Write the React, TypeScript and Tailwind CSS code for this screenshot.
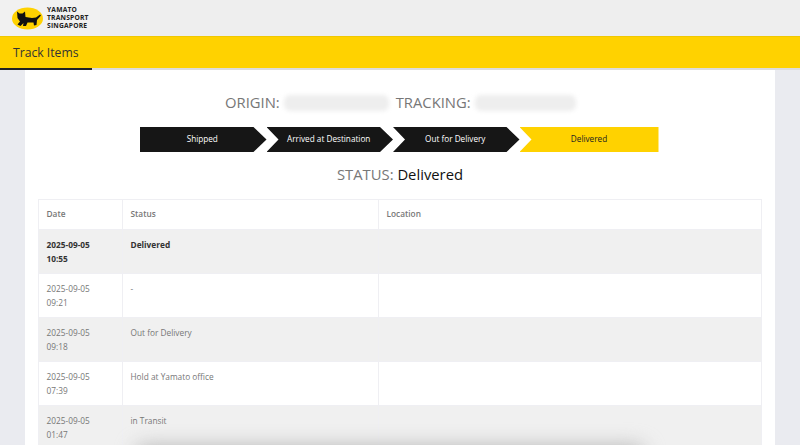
import React from 'react';

const steps = ['Shipped', 'Arrived at Destination', 'Out for Delivery'];

const rows = [
  { date: '2025-09-05', time: '10:55', status: 'Delivered', bold: true },
  { date: '2025-09-05', time: '09:21', status: '-' },
  { date: '2025-09-05', time: '09:18', status: 'Out for Delivery' },
  { date: '2025-09-05', time: '07:39', status: 'Hold at Yamato office' },
  { date: '2025-09-05', time: '01:47', status: 'in Transit' },
];

const Logo = () => (
  <svg width="31" height="23" viewBox="0 0 31 23" className="shrink-0">
    <ellipse cx="15.5" cy="11.5" rx="15.5" ry="11" fill="#ffd200" />
    <path
      d="M5 4.5 L7.5 6.5 L10.5 6.5 L13 4.5 L13.5 10 L20 11 L24 10.5 L28 7.5 L29 8.5 L25 13 L24.5 18 L22 18.5 L21.5 15.5 L15.5 15.5 L14 19 L11 19 L11.5 16 L8.5 19 L5.5 17.5 L8 14.5 L5.5 11 Z"
      fill="#111"
    />
  </svg>
);

const App: React.FC = () => {
  return (
    <div className="relative h-[445px] w-[800px] overflow-hidden bg-[#eaebf0] font-['Open_Sans',sans-serif]">
      <header className="flex h-9 bg-[#eeeeee]">
        <div className="flex w-[100px] items-center gap-[4px] bg-[#f1f1f1] pl-[12px]">
          <Logo />
          <div className="text-[6.7px] font-bold leading-[8px] tracking-[0.2px] text-[#222]">
            <div>YAMATO</div>
            <div>TRANSPORT</div>
            <div>SINGAPORE</div>
          </div>
        </div>
      </header>

      <div className="flex h-8 items-center border-t border-[#f0c800] bg-[#ffd200] pl-[13px] pt-[2px] text-[12.2px] text-[#333]">
        Track Items
      </div>
      <div className="h-0.5 bg-[#dcdcdc]">
        <div className="h-0.5 w-[92px] bg-[#222]" />
      </div>

      <main className="mx-[25px] h-[375px] bg-white px-[13px]">
        <div className="flex h-[57px] items-end pb-[15px] pl-[187px] text-[14.8px] leading-[20px] text-[#777]">
          <span>ORIGIN:</span>
          <span className="mb-[1px] ml-[4px] mr-[7px] h-[16px] w-[105px] rounded-[6px] bg-[#eeeeee] blur-[2px]" />
          <span>TRACKING:</span>
          <span className="mb-[1px] ml-[4px] h-[16px] w-[101px] rounded-[6px] bg-[#eeeeee] blur-[2px]" />
        </div>

        <div className="flex pl-[102px]">
          {steps.map((step) => (
            <div
              key={step}
              className="flex h-[25px] w-[126.5px] items-center justify-center bg-[#161616] pr-[2px] text-[8.2px] text-white first:[clip-path:polygon(0_0,calc(100%-13px)_0,100%_50%,calc(100%-13px)_100%,0_100%)] [clip-path:polygon(0_0,calc(100%-13px)_0,100%_50%,calc(100%-13px)_100%,0_100%,12px_50%)]"
            >
              {step}
            </div>
          ))}
          <div className="flex h-[25px] w-[139px] items-center justify-center bg-[#ffd200] text-[8.2px] text-[#222] [clip-path:polygon(0_0,100%_0,100%_100%,0_100%,12px_50%)]">
            Delivered
          </div>
        </div>

        <div className="mt-[11px] text-center text-[14.8px] leading-[22px] text-[#777]">
          STATUS: <span className="text-[#111]">Delivered</span>
        </div>

        <table className="mt-[14px] w-[724px] table-fixed border-collapse text-[8.3px] text-[#777]">
          <colgroup>
            <col className="w-[84px]" />
            <col className="w-[256px]" />
            <col />
          </colgroup>
          <thead>
            <tr className="h-[30px] font-semibold">
              <th className="border border-[#efeff3] pl-[7.5px] text-left font-semibold">Date</th>
              <th className="border border-[#efeff3] pl-[7.5px] text-left font-semibold">Status</th>
              <th className="border border-[#efeff3] pl-[7.5px] text-left font-semibold">Location</th>
            </tr>
          </thead>
          <tbody>
            {rows.map((row, i) => (
              <tr
                key={row.time}
                className={`h-[44px] align-top leading-[14px] ${i % 2 === 0 ? 'bg-[#f0f0f0]' : 'bg-white'} ${row.bold ? 'font-bold text-[#333]' : ''}`}
              >
                <td className="border border-[#efeff3] pl-[7.5px] pt-[8px]">
                  {row.date}
                  <br />
                  {row.time}
                </td>
                <td className="border border-[#efeff3] pl-[7.5px] pt-[8px]">{row.status}</td>
                <td className="border border-[#efeff3]" />
              </tr>
            ))}
          </tbody>
        </table>
      </main>

      {/* redacted footer smudge */}
      <div className="absolute left-[135px] top-[446px] h-[20px] w-[510px] rounded-full bg-[#b5b5b5] blur-[10px]" />
    </div>
  );
};

export default App;
